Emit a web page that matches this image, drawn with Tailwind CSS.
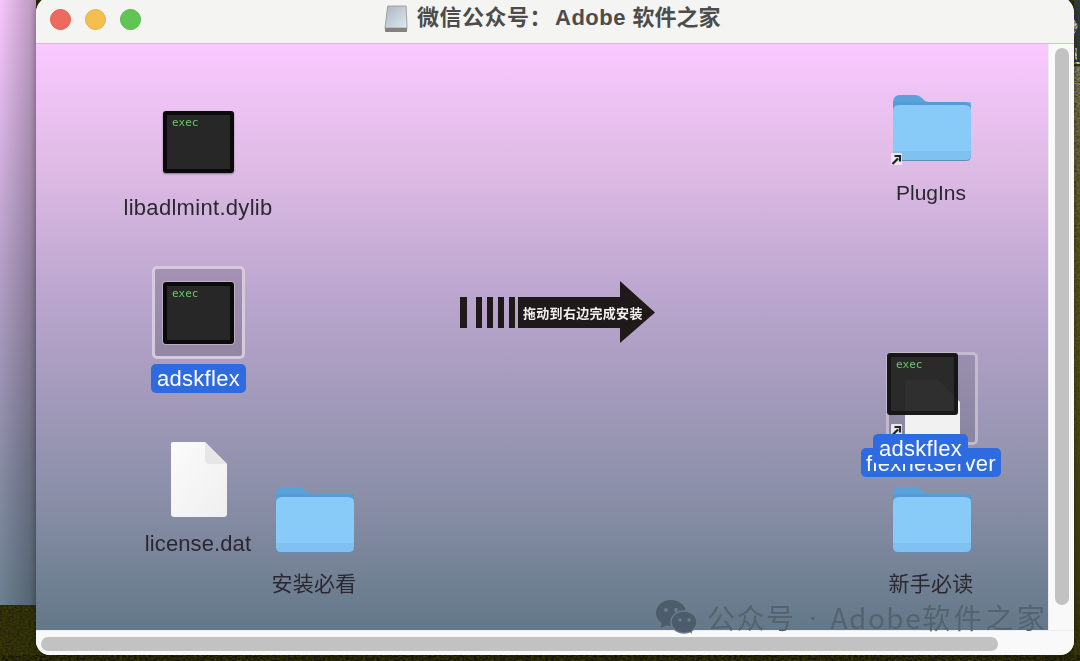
<!DOCTYPE html>
<html lang="en">
<head>
  <meta charset="UTF-8" />
  <title>微信公众号：Adobe 软件之家</title>
  <script src="https://cdn.jsdelivr.net/npm/@tailwindcss/browser@4"></script>
</head>
<body class="bg-[#1d1b10] font-['Liberation_Sans','Noto_Sans_CJK_SC',sans-serif] overflow-hidden">
  <svg class="hidden">
    <symbol id="folder" viewBox="0 0 78 66">
      <path d="M0 8Q0 0 7 0H22Q26 0 29 3L32 6Q34 7 37 7H72Q78 7 78 13V40H0Z" fill="#5aa3da"/>
      <path d="M0 7H78V12H0Z" fill="#4f97d4" opacity="0.55"/>
      <path d="M0 16Q0 10 6 10H72Q78 10 78 16V60Q78 65 73 65H5Q0 65 0 60Z" fill="#89cbf8"/>
      <path d="M0 56H78V60Q78 65 73 65H5Q0 65 0 60Z" fill="#80c1f1"/>
      <path d="M0 60Q0 65 5 65H73Q78 65 78 60V61Q78 66 73 66H5Q0 66 0 61Z" fill="#5f8db5"/>
    </symbol>
    <symbol id="alias" viewBox="0 0 13 14">
      <rect x="1" y="1" width="11" height="12" rx="1" fill="#e8e8e8"/>
      <path d="M2.500 12 L8 6.500 M4.500 4 H10 V9.500" fill="none" stroke="#222" stroke-width="2.200"/>
    </symbol>
  </svg>

  <div class="relative w-[1080px] h-[661px] overflow-hidden">
    <!-- desktop behind the window -->
    <svg class="absolute inset-0" width="1080" height="661">
      <defs>
        <linearGradient id="hill" x1="0" y1="0" x2="0" y2="1">
          <stop offset="0" stop-color="#8f8b84"/>
          <stop offset="0.1" stop-color="#77705c"/>
          <stop offset="0.3" stop-color="#5e5a32"/>
          <stop offset="0.6" stop-color="#4c4a22"/>
          <stop offset="1" stop-color="#2c2712"/>
        </linearGradient>
        <filter id="leaves" x="0" y="0" width="100%" height="100%">
          <feTurbulence type="fractalNoise" baseFrequency="0.35 0.55" numOctaves="2" seed="4"/>
          <feColorMatrix values="0 0 0 0 0.05  0 0 0 0 0.05  0 0 0 0 0  1.8 0 0 0 -0.5"/>
        </filter>
      </defs>
      <rect width="1080" height="661" fill="#24210f"/>
      <rect x="1074" y="66" width="6" height="595" fill="url(#hill)"/>
      <rect x="1074" y="0" width="6" height="62" fill="#25355c"/>
      <rect x="1074" y="62" width="6" height="2" fill="#d5d8de"/>
      <path d="M1074 19L1078 26L1074 35Z" fill="#d8dce4"/>
      <rect x="1075" y="48" width="2" height="12" fill="#d8dce4"/>
      <rect x="0" y="605" width="40" height="50" fill="#24230f"/>
      <rect x="0" y="655" width="1080" height="6" fill="#15130a"/>
      <rect width="1080" height="661" filter="url(#leaves)"/>
    </svg>
    <div class="absolute left-0 top-0 w-[36px] h-[605px] bg-[linear-gradient(180deg,#f6c6fb_0%,#b49fc6_45%,#8a8ca6_75%,#6b8090_100%)]">
      <div class="h-full w-full bg-gradient-to-r from-transparent to-black/25"></div>
    </div>

    <!-- finder window -->
    <div class="absolute left-[36px] -top-[4px] w-[1038px] h-[659px] flex flex-col rounded-t-[17px] rounded-b-[14px] overflow-hidden bg-[#f9f9f9] shadow-[0_0_6px_rgba(0,0,0,0.35)]">
      <header class="relative flex items-center h-[48px] pt-[4px] pb-[4px] shrink-0 bg-[#f4f4f2] border-b border-[#dbb8e0]">
        <div class="flex gap-[14px] pl-[14px]">
          <span class="w-[21px] h-[21px] rounded-full bg-[#ee6a5f] border border-[#e0584e]"></span>
          <span class="w-[21px] h-[21px] rounded-full bg-[#f5bf4f] border border-[#e5ae40]"></span>
          <span class="w-[21px] h-[21px] rounded-full bg-[#61c554] border border-[#55b548]"></span>
        </div>
        <div class="absolute left-[348px] top-[6px] flex items-center h-[32px]">
          <svg width="24" height="27" viewBox="0 0 26 27" class="mr-[9px]" preserveAspectRatio="none">
            <defs>
              <linearGradient id="disk" x1="0" y1="0" x2="1" y2="1">
                <stop offset="0" stop-color="#aab4bf"/>
                <stop offset="1" stop-color="#dfeaf0"/>
              </linearGradient>
            </defs>
            <path d="M4 1H24L25 23H1Z" fill="url(#disk)" stroke="#8d9196" stroke-width="0.800"/>
            <path d="M1 23H25V26Q25 27 24 27H2Q1 27 1 26Z" fill="#85827d"/>
          </svg>
          <h1 class="text-[22px] leading-none font-semibold tracking-[0.5px] text-[#4c4c4c] whitespace-nowrap"><span class="mr-[3px]">微信公众号：</span>Adobe <span class="tracking-normal">软件之家</span></h1>
        </div>
      </header>

      <div class="flex flex-1 min-h-0">
        <!-- icon canvas, coordinates are free placement like the real Finder view -->
        <main class="relative flex-1 overflow-hidden blur-[0.4px] bg-[linear-gradient(180deg,#f9c9ff_0%,#e0bce6_20%,#b9a5cd_44%,#8b8fa8_77%,#637888_100%)] text-[22px] leading-none tracking-[0.3px] text-[#2b2730]">

          <div class="absolute left-[127px] top-[67px] w-[71px] h-[62px] rounded-[3px] bg-black border-[4px] border-[#0a0a0a] shadow-[0_1px_2px_rgba(0,0,0,0.4)]">
            <div class="w-full h-full bg-[#272727] px-[5px] pt-[1px] font-['DejaVu_Sans_Mono',monospace] text-[11px] leading-[14px] tracking-normal text-[#6ac864]">exec</div>
          </div>
          <div class="absolute left-[62px] top-[153px] w-[200px] text-center">libadlmint.dylib</div>

          <div class="absolute left-[116px] top-[222px] w-[93px] h-[93px] rounded-[5px] border-[3px] border-[#d6cbdd] bg-black/15"></div>
          <div class="absolute left-[127px] top-[238px] w-[71px] h-[62px] rounded-[3px] bg-black border-[4px] border-[#0a0a0a] shadow-[0_0_0_1px_rgba(255,255,255,0.3)]">
            <div class="w-full h-full bg-[#272727] px-[5px] pt-[1px] font-['DejaVu_Sans_Mono',monospace] text-[11px] leading-[14px] tracking-normal text-[#6ac864]">exec</div>
          </div>
          <div class="absolute left-[115px] top-[320px] w-[95px] h-[29px] rounded-[5px] bg-[#2e6ae0] text-white text-center leading-[29px]">adskflex</div>

          <svg class="absolute left-[135px] top-[398px]" width="56" height="75" viewBox="0 0 56 75">
            <defs>
              <linearGradient id="paper" x1="0" y1="0" x2="1" y2="1">
                <stop offset="0" stop-color="#fbfbfb"/>
                <stop offset="1" stop-color="#efefef"/>
              </linearGradient>
            </defs>
            <path d="M2 0H34L56 22V72Q56 75 53 75H3Q0 75 0 72V2Q0 0 2 0Z" fill="url(#paper)"/>
            <path d="M34 0V17Q34 22 39 22H56Z" fill="#e6e6e6"/>
            <path d="M0 73Q0 75 3 75H53Q56 75 56 73V74Q56 75.500 53 75.500H3Q0 75.500 0 74Z" fill="#8a8f9a"/>
          </svg>
          <div class="absolute left-[62px] top-[489px] w-[200px] text-center tracking-[0.1px]">license.dat</div>

          <svg class="absolute left-[240px] top-[443px]" width="78" height="66"><use href="#folder"/></svg>
          <div class="absolute left-[178px] top-[528px] w-[200px] text-center text-[21px] font-['Noto_Sans_CJK_SC',sans-serif]">安装必看</div>

          <svg class="absolute left-[857px] top-[51px]" width="78" height="66"><use href="#folder"/></svg>
          <svg class="absolute left-[854px] top-[108px]" width="13" height="14"><use href="#alias"/></svg>
          <div class="absolute left-[795px] top-[138px] w-[200px] text-center text-[21px] tracking-normal">PlugIns</div>

          <svg class="absolute left-[857px] top-[443px]" width="78" height="66"><use href="#folder"/></svg>
          <div class="absolute left-[795px] top-[528px] w-[200px] text-center text-[21px] font-['Noto_Sans_CJK_SC',sans-serif]">新手必读</div>

          <!-- drag to applications hint -->
          <svg class="absolute left-[424px] top-[237px]" width="196" height="63" viewBox="0 0 196 63">
            <g fill="#1f1a19">
              <rect x="0" y="16" width="7" height="31"/>
              <rect x="16" y="16" width="6" height="31"/>
              <rect x="27" y="16" width="6" height="31"/>
              <rect x="38" y="16" width="6" height="31"/>
              <rect x="49" y="16" width="6" height="31"/>
              <path d="M58 16H160V0L195 31.500L160 62V47H58Z"/>
            </g>
            <text x="63" y="37" fill="#f2f0ee" font-size="13" font-weight="700" font-family="Noto Sans CJK SC, sans-serif">拖动到右边完成安装</text>
          </svg>

          <!-- items being dragged -->
          <div class="absolute left-[850px] top-[308px] w-[92px] h-[93px] rounded-[5px] border-[3px] border-[#cfc6d6]/80 bg-black/10"></div>
          <svg class="absolute left-[869px] top-[336px]" width="55" height="71" viewBox="0 0 55 71">
            <path d="M2 0H33L55 22V71H2Q0 71 0 69V2Q0 0 2 0Z" fill="#f1f1f1"/>
          </svg>
          <svg class="absolute left-[854px] top-[379px]" width="13" height="14"><use href="#alias"/></svg>
          <div class="absolute left-[851px] top-[309px] w-[71px] h-[62px] rounded-[3px] bg-black/75 border-[4px] border-[#151515]/90">
            <div class="w-full h-full bg-[#2c2c2c]/80 px-[5px] pt-[1px] font-['DejaVu_Sans_Mono',monospace] text-[11px] leading-[14px] tracking-normal text-[#6ac864]">exec</div>
          </div>
          <div class="absolute left-[825px] top-[404px] w-[140px] h-[29px] rounded-[5px] bg-[#2e6ae0] text-white text-center leading-[31px]">flexnetserver</div>
          <div class="absolute left-[837px] top-[390px] w-[95px] h-[30px] rounded-[5px] bg-[#2e6ae0] text-white text-center leading-[30px]">adskflex</div>
        </main>

        <!-- vertical scroller -->
        <aside class="w-[26px] shrink-0 bg-[#f9f9f9] pl-[6px] pr-[5px] pt-[4px] pb-[25px] border-l border-[#ececec]">
          <div class="h-full rounded-full bg-[#c2c2c2]"></div>
        </aside>
      </div>

      <!-- horizontal scroller -->
      <div class="h-[25px] shrink-0 bg-[#f9f9f9] pl-[5px] pr-[76px] pt-[6px] pb-[4px] border-t border-[#ececec]">
        <div class="h-full rounded-full bg-[#c2c2c2]"></div>
      </div>
    </div>

    <!-- watermark sits over the whole screenshot -->
    <div class="absolute left-[656px] top-[600px] flex items-center whitespace-nowrap blur-[0.3px] text-[#55636f] font-['Noto_Sans_CJK_SC',sans-serif] text-[28px] leading-none tracking-[1.500px]">
      <svg width="41" height="34" viewBox="0 0 41 34" fill="#4c5c6a" class="mr-[10px]">
        <ellipse cx="15" cy="13" rx="15" ry="13"/>
        <path d="M6 21L5 28L13 24Z"/>
        <ellipse cx="28" cy="22" rx="13" ry="11" stroke="#6a7d8c" stroke-width="1.500"/>
        <path d="M33 31L36 34L35 28Z"/>
        <circle cx="10" cy="10" r="2" fill="#6a7d8c"/>
        <circle cx="20" cy="10" r="2" fill="#6a7d8c"/>
        <circle cx="24" cy="20" r="1.700" fill="#6a7d8c"/>
        <circle cx="33" cy="20" r="1.700" fill="#6a7d8c"/>
      </svg>
      <span>公众号</span>
      <span class="w-[35px] text-center font-['Liberation_Sans',sans-serif] tracking-normal">·</span>
      <span>Adobe</span>
      <span class="tracking-[3.500px]">软件之家</span>
    </div>
  </div>
</body>
</html>
